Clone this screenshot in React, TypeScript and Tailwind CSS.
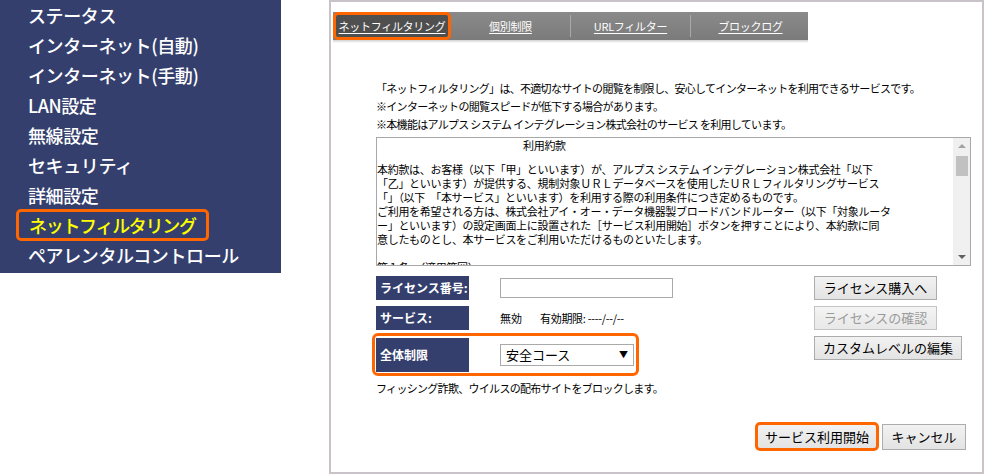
import React from "react";

const menu = [
  "ステータス",
  "インターネット(自動)",
  "インターネット(手動)",
  "LAN設定",
  "無線設定",
  "セキュリティ",
  "詳細設定",
  "ネットフィルタリング",
  "ペアレンタルコントロール",
];

const tabs = ["ネットフィルタリング", "個別制限", "URLフィルター", "ブロックログ"];

const terms = [
  "本約款は、お客様（以下「甲」といいます）が、アルプス システム インテグレーション株式会社「以下",
  "「乙」といいます）が提供する、規制対象ＵＲＬデータベースを使用したＵＲＬフィルタリングサービス",
  "「」（以下　「本サービス」といいます）を利用する際の利用条件につき定めるものです。",
  "ご利用を希望される方は、株式会社アイ・オー・データ機器製ブロードバンドルーター（以下「対象ルータ",
  "ー」といいます）の設定画面上に設置された［サービス利用開始］ボタンを押すことにより、本約款に同",
  "意したものとし、本サービスをご利用いただけるものといたします。",
];

const font = "font-['Noto_Sans_CJK_JP','Noto_Sans',sans-serif]";

export default function App() {
  return (
    <div className={`flex w-[985px] h-[474px] bg-white text-black ${font}`}>
      {/* サイドメニュー */}
      <div className="w-[281px] h-[273px] bg-[#343f6e]">
        {menu.map((m) => {
          const active = m === "ネットフィルタリング";
          return (
            <div key={m} className="h-[30px] flex items-center pl-[17px]">
              <div
                className={`h-[32px] flex items-center rounded-[5px] text-[18px] font-medium leading-none whitespace-nowrap ${
                  active
                    ? "border-[3px] border-[#ff6600] text-[#ffff00] -ml-[1px] pl-[10px] pr-[10px] tracking-[-1.3px]"
                    : "text-white pl-[11px] tracking-[-0.4px]"
                }`}
              >
                {m}
              </div>
            </div>
          );
        })}
      </div>

      {/* 右パネル */}
      <div className="ml-[48px] w-[655px] h-[474px] border-2 border-[#c9c3c9]">
        <div className="ml-[2px] mt-[10px] w-[475px]">
          <div className="flex h-[28px] bg-gradient-to-b from-[#8a8a8a] to-[#7b7b7b]">
            {tabs.map((t, i) => (
              <div key={t} className="flex items-center">
                {i > 1 && <div className="w-px h-[22px] bg-[#a9a9a9]" />}
                <div
                  className={`h-[28px] flex items-center justify-center text-[11px] tracking-[-0.3px] text-white underline underline-offset-2 ${
                    i === 0
                      ? "w-[118px] bg-[#4f4f4f] border-[3px] border-[#ff6600] rounded-[5px]"
                      : "w-[119px]"
                  }`}
                >
                  {t}
                </div>
              </div>
            ))}
          </div>
          <div className="h-[3px] bg-gradient-to-b from-[#d0d0d0] to-white" />
        </div>

        <div className="ml-[45px] mt-[36px] text-[11px] tracking-[-0.7px] leading-[18px] whitespace-nowrap">
          <p>「ネットフィルタリング」は、不適切なサイトの閲覧を制限し、安心してインターネットを利用できるサービスです。</p>
          <p>※インターネットの閲覧スピードが低下する場合があります。</p>
          <p>※本機能はアルプス システム インテグレーション株式会社のサービス を利用しています。</p>

          {/* 利用約款 */}
          <div className="mt-[4px] w-[595px] h-[129px] border border-[#a8a8a8] flex overflow-hidden tracking-[-0.3px]">
            <div className="flex-1 text-[11px] leading-[14px] pt-0 overflow-hidden">
              <div className="pl-[146px]">利用約款</div>
              <div className="h-[10px]" />
              {terms.map((l) => (
                <div key={l}>{l}</div>
              ))}
              <div className="h-[14px]" />
              <div>第１条　（適用範囲）</div>
            </div>
            <div className="w-[17px] bg-[#f0f0f0] flex flex-col items-center py-[6px]">
              <div className="w-0 h-0 border-x-[4px] border-x-transparent border-b-[4px] border-b-[#a3a3a3]" />
              <div className="mt-[8px] w-[12px] h-[20px] bg-[#c1c1c1]" />
              <div className="flex-1" />
              <div className="w-0 h-0 border-x-[4px] border-x-transparent border-t-[4px] border-t-[#606060]" />
            </div>
          </div>

          {/* フォーム */}
          <div className="mt-[10px] flex tracking-normal">
            <div className="w-[438px]">
              <div className="flex h-[24px] items-center">
                <div className="w-[93px] h-[24px] bg-[#343f6e] text-white font-bold text-[12px] flex items-center pl-[4px]">ライセンス番号:</div>
                <div className="ml-[31px] w-[173px] h-[20px] border border-[#a9a9a9]" />
              </div>
              <div className="flex h-[24px] items-center mt-[6px]">
                <div className="w-[93px] h-[24px] bg-[#343f6e] text-white font-bold text-[12px] flex items-center pl-[4px]">サービス:</div>
                <div className="ml-[31px] text-[11px]">無効</div>
                <div className="ml-[18px] text-[11px] tracking-[-0.3px]">有効期限: ----/--/--</div>
              </div>
              <div className="mt-[3px] -ml-[4px] w-[267px] h-[43px] border-[3px] border-[#ff6600] rounded-[6px] flex items-center pl-[1px]">
                <div className="w-[93px] h-[34px] bg-[#343f6e] text-white font-bold text-[12px] flex items-center pl-[4px]">全体制限</div>
                <div className="ml-[31px] w-[134px] h-[22px] border border-[#a9a9a9] flex items-center justify-between px-[5px] text-[13px]">
                  <span>安全コース</span>
                  <span className="text-[9px]">▼</span>
                </div>
              </div>
            </div>
            <div className="flex flex-col gap-[6px]">
              <button className="w-[123px] h-[24px] border border-[#acacac] bg-gradient-to-b from-[#f2f2f2] to-[#e3e3e3] text-[13px]">ライセンス購入へ</button>
              <button className="w-[123px] h-[24px] border border-[#c4c4c4] bg-gradient-to-b from-[#f4f4f4] to-[#e8e8e8] text-[13px] text-[#9a9a9a]">ライセンスの確認</button>
              <button className="w-[148px] h-[24px] border border-[#acacac] bg-gradient-to-b from-[#f2f2f2] to-[#e3e3e3] text-[13px]">カスタムレベルの編集</button>
            </div>
          </div>
          <p className="mt-[3px]">フィッシング詐欺、ウイルスの配布サイトをブロックします。</p>

          <div className="mt-[25px] flex justify-end w-[590px] gap-[3px] items-center tracking-normal">
            <button className="w-[124px] h-[29px] border-[3px] border-[#ff6600] rounded-[5px] bg-gradient-to-b from-[#f2f2f2] to-[#e3e3e3] text-[13px]">サービス利用開始</button>
            <button className="w-[84px] h-[26px] border border-[#acacac] bg-gradient-to-b from-[#f2f2f2] to-[#e3e3e3] text-[13px]">キャンセル</button>
          </div>
        </div>
      </div>
    </div>
  );
}
